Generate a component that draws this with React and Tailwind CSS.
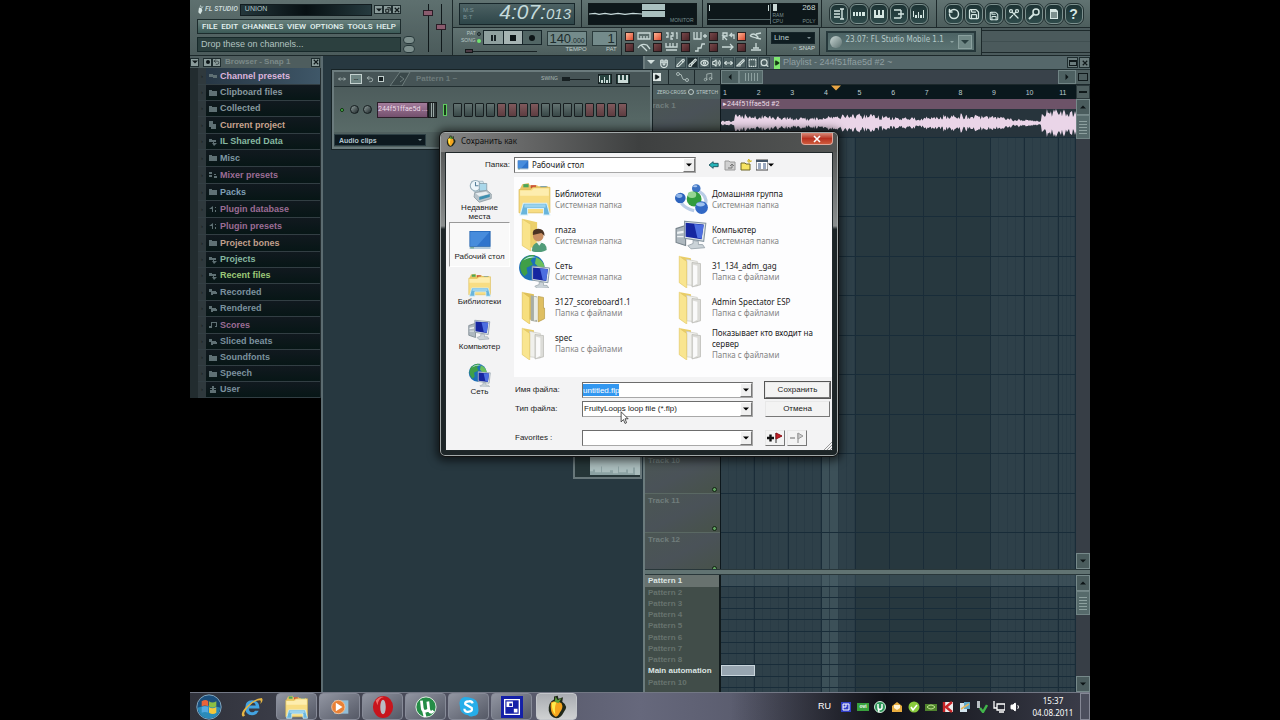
import { Play, RotateCcw, Save, Scissors, Undo2, Pencil, Magnet, Brush, Eye, Volume2, MoveHorizontal, Slice, SquareDashed, Search, Music, Volume1 } from 'lucide-react';

const menuItems = ['FILE', 'EDIT', 'CHANNELS', 'VIEW', 'OPTIONS', 'TOOLS', 'HELP'];

const browserItems = [
    { name: 'Channel presets', color: 'text-[#dcb4dc]', height: 'h-[17px]', icon: 'plug', active: true },
    { name: 'Clipboard files', color: 'text-[#87999f]', height: 'h-4', icon: 'folder' },
    { name: 'Collected', color: 'text-[#87999f]', height: 'h-4', icon: 'folder' },
    { name: 'Current project', color: 'text-[#c8a48e]', height: 'h-[17px]', icon: 'page' },
    { name: 'IL Shared Data', color: 'text-[#86b8a0]', height: 'h-4', icon: 'link' },
    { name: 'Misc', color: 'text-[#7f98a4]', height: 'h-[17px]', icon: 'folder' },
    { name: 'Mixer presets', color: 'text-[#9c6c94]', height: 'h-[17px]', icon: 'dots' },
    { name: 'Packs', color: 'text-[#7f9fb4]', height: 'h-[17px]', icon: 'folder' },
    { name: 'Plugin database', color: 'text-[#9c6c94]', height: 'h-[17px]', icon: 'plugin' },
    { name: 'Plugin presets', color: 'text-[#9c6c94]', height: 'h-[17px]', icon: 'plugin' },
    { name: 'Project bones', color: 'text-[#c0a08c]', height: 'h-[17px]', icon: 'folder' },
    { name: 'Projects', color: 'text-[#86b8a0]', height: 'h-4', icon: 'link' },
    { name: 'Recent files', color: 'text-[#9cc878]', height: 'h-4', icon: 'link' },
    { name: 'Recorded', color: 'text-[#7b929e]', height: 'h-[17px]', icon: 'wave' },
    { name: 'Rendered', color: 'text-[#7b929e]', height: 'h-4', icon: 'wave' },
    { name: 'Scores', color: 'text-[#9c6c94]', height: 'h-[17px]', icon: 'note' },
    { name: 'Sliced beats', color: 'text-[#7b929e]', height: 'h-4', icon: 'wave' },
    { name: 'Soundfonts', color: 'text-[#7b929e]', height: 'h-4', icon: 'folder' },
    { name: 'Speech', color: 'text-[#7b929e]', height: 'h-4', icon: 'folder' },
    { name: 'User', color: 'text-[#7b929e]', height: 'h-4', icon: 'user' },
];

const treePaths = {
    plug: 'M0 2h4v1h4v3H4V5H0z',
    folder: 'M0 1h3v1h5v5H0z',
    page: 'M0 0h4v3h3v5H2V6H0z',
    link: 'M0 1h3v1h4v2H5v1h3L5 8 3 5h1V4H0z',
    dots: 'M0 1h3v2H0zM0 4h3v2H0zM5 3h2v1H5zM5 5h3v2H5z',
    plugin: 'M0 4l4-3v6H3V4H1zM6 2h1v1H6zM6 5h1v2H6z',
    wave: 'M0 1h3v2h4v1h1v2H4v1H2V4H0z',
    note: 'M2 1h6v5H6V5h1V2H3v5H0V5h2z',
    user: 'M3 0h2v2h2v1H5v1h2v3H1V4h2V3H1V2h2z',
};

const patterns = ['Pattern 1', 'Pattern 2', 'Pattern 3', 'Pattern 4', 'Pattern 5', 'Pattern 6', 'Pattern 7', 'Pattern 8', 'Main automation', 'Pattern 10'];
const tracks = [1, 2, 3, 4, 5, 6, 7, 8, 9, 10, 11, 12];
const bars = [1, 2, 3, 4, 5, 6, 7, 8, 9, 10, 11];

const places = [
    { name: 'Недавние места', icon: RecentIcon },
    { name: 'Рабочий стол', icon: DesktopIcon, active: true },
    { name: 'Библиотеки', icon: LibraryIcon },
    { name: 'Компьютер', icon: ComputerIcon },
    { name: 'Сеть', icon: NetworkIcon },
];

const files = [
    { name: 'Библиотеки', type: 'Системная папка', icon: LibraryIcon },
    { name: 'Домашняя группа', type: 'Системная папка', icon: HomegroupIcon },
    { name: 'rnaza', type: 'Системная папка', icon: UserFolderIcon },
    { name: 'Компьютер', type: 'Системная папка', icon: ComputerIcon },
    { name: 'Сеть', type: 'Системная папка', icon: NetworkIcon },
    { name: '31_134_adm_gag', type: 'Папка с файлами', icon: FolderIcon },
    { name: '3127_scoreboard1.1', type: 'Папка с файлами', icon: FullFolderIcon },
    { name: 'Admin Spectator ESP', type: 'Папка с файлами', icon: FolderIcon },
    { name: 'spec', type: 'Папка с файлами', icon: FolderIcon },
    { name: 'Показывает кто входит на сервер', type: 'Папка с файлами', icon: FolderIcon },
];

// Closed outline of the audio clip, mirrored around its middle
function wavePath() {
    const top = [];
    const bottom = [];
    for (let x = 0; x <= 354; x++) {
        const noise = Math.abs(Math.sin(x * 127.1) * 43758.5453) % 1;
        const swell = 1 + 0.25 * Math.sin(x / 17);
        let amp = (3 + noise * 5) * swell;
        if (x < 14) amp = 1 + noise * 2;
        if (x > 290) amp = amp * 0.75;
        if (x > 306) amp = 1 + noise * 2;
        if (x > 319) amp = 6 + noise * 9;
        top.push(`${x} ${(14.5 - amp).toFixed(1)}`);
        bottom.unshift(`${x} ${(14.5 + amp).toFixed(1)}`);
    }
    return `M${top.join('L')}L${bottom.join('L')}Z`;
}

function RecentIcon({ className }) {
    return (
        <svg viewBox="0 0 32 32" className={className}>
            <path d="M5 3h15l4 14H8z" fill="#dcebf2" stroke="#9fb4c0" />
            <circle cx="10" cy="9" r="7" fill="#eef6fa" stroke="#9ab0bc" strokeWidth="1.5" />
            <path d="M10 4v5h4" fill="none" stroke="#58809a" strokeWidth="1.4" />
            <path d="M15 6h10v10H15z" fill="#a9d7ea" stroke="#8097a3" />
            <path d="M9 18l16-3 6 5v6l-16 5-7-7z" fill="#b8c3ca" stroke="#87959d" />
            <path d="M15 24l14-4v4l-14 4z" fill="#3d8fb0" />
            <path d="M10 19l14-2 4 3-13 3z" fill="#e8eef1" />
        </svg>
    );
}

function DesktopIcon({ className }) {
    return (
        <svg viewBox="0 0 32 32" className={className}>
            <path d="M2 4h28v24H2z" fill="#b4cbdc" />
            <path d="M2 4h28v21H2z" fill="#1c5fae" />
            <path d="M3 5h26v19H3z" fill="#2f74cc" />
            <path d="M3 5h26L12 24H3z" fill="#478cdc" />
            <path d="M3 26h5v1H3z" fill="#3c8b58" />
        </svg>
    );
}

function LibraryIcon({ className }) {
    return (
        <svg viewBox="0 0 32 32" className={className}>
            <path d="M4 2l6-1 1 2h7l1 1h9v24H2V6z" fill="#e8c565" />
            <path d="M5 2h5v3H5z" fill="#4aa658" />
            <path d="M12 3h5v3h-5z" fill="#cc5138" />
            <path d="M21 4h6v3h-6z" fill="#4990c8" />
            <path d="M1 7h11l2-2h16v24H1z" fill="#f8dd83" stroke="#d9b851" strokeWidth=".7" />
            <path d="M2 8h11l2-2h14v7H2z" fill="#fdedae" />
            <path d="M5 20h22l3 11h-6v-6H9v6H2z" fill="#69b5dc" stroke="#d6f0fc" />
            <path d="M6 21h20v3H6z" fill="#9bd3ee" />
        </svg>
    );
}

function MonitorShape() {
    return (
        <>
            <path d="M9 3l20 2-2 17-18-3z" fill="#dfe6ea" stroke="#8595a0" />
            <path d="M10 4.500l17 1.600-2 14-15-2.400z" fill="#1626a0" />
            <path d="M18 5.600l9 1-2 13-4-1z" fill="#4c6ee0" />
            <path d="M17 21l5 1v3h4l2 3-13 1-3-3 5-2z" fill="#cbd3d8" stroke="#8d9aa2" strokeWidth=".7" />
        </>
    );
}

function ComputerIcon({ className }) {
    return (
        <svg viewBox="0 0 32 32" className={className}>
            <path d="M1 10l9-3v19l-9-3z" fill="#aeb8bf" stroke="#77838b" />
            <path d="M2 13l6-1v2l-6 1zM2 17h6v1H2z" fill="#eef2f4" />
            <MonitorShape />
        </svg>
    );
}

function NetworkIcon({ className }) {
    return (
        <svg viewBox="0 0 32 32" className={className}>
            <circle cx="13" cy="13" r="12" fill="#1d6fb8" />
            <path d="M3 7q5-7 13-6l-4 5 2 4-6 3 1 5-3 3Q0 15 3 7z" fill="#3f9f48" />
            <path d="M17 3q7 3 8 9l-5 1-4-4z" fill="#6bc05c" />
            <path d="M5 6q5-5 12-3-7 0-12 3z" fill="#c9efff" />
            <g transform="translate(6 9) scale(.82)">
                <MonitorShape />
            </g>
        </svg>
    );
}

function HomegroupIcon({ className }) {
    return (
        <svg viewBox="0 0 32 32" className={className}>
            <path d="M23 9q7 4 6 11M6 20q4 5 12 7" fill="none" stroke="#b9cce6" strokeWidth="3" />
            <circle cx="20" cy="6" r="4" fill="#3d73c4" />
            <circle cx="5" cy="15" r="5" fill="#2c63bd" />
            <circle cx="18" cy="16" r="7" fill="#319c3e" />
            <circle cx="25" cy="24" r="6" fill="#3268c5" />
            <ellipse cx="16" cy="12" rx="4" ry="3" fill="#96d593" />
            <ellipse cx="4" cy="13" rx="3" ry="2" fill="#8eb4e8" />
            <ellipse cx="24" cy="21" rx="4" ry="2" fill="#9dc0ee" />
            <ellipse cx="19" cy="4" rx="2" ry="1" fill="#a8c6ee" />
        </svg>
    );
}

function FolderIcon({ className }) {
    return (
        <svg viewBox="0 0 32 32" className={className}>
            <path d="M5 2l10 2v25L5 26z" fill="#e9cd68" />
            <path d="M11 5l10 2v23l-10-1z" fill="#f0f0ec" stroke="#c6c6bf" strokeWidth=".6" />
            <path d="M16 8l8 1v20l-8 2z" fill="#dcdcd8" stroke="#b2b2ac" strokeWidth=".6" />
            <path d="M17 10l4 1v17l-4 2z" fill="#fafafa" />
            <path d="M4 2l7 5v25l-7-5z" fill="#f9e58f" stroke="#e2c762" strokeWidth=".6" />
        </svg>
    );
}

function FullFolderIcon({ className }) {
    return (
        <svg viewBox="0 0 32 32" className={className}>
            <path d="M5 2l10 2v25L5 26z" fill="#dfc15b" />
            <path d="M12 5l6 1v24l-6-1z" fill="#a8ada3" />
            <path d="M15 6l3 1v21l-3 1z" fill="#e8ebe4" />
            <path d="M19 6l5 1v10h1v10l-6 3z" fill="#dfbf62" stroke="#b4953e" strokeWidth=".6" />
            <path d="M4 2l7 5v25l-7-5z" fill="#f7df7e" stroke="#dcbd55" strokeWidth=".6" />
        </svg>
    );
}

function UserFolderIcon({ className }) {
    return (
        <svg viewBox="0 0 32 32" className={className}>
            <path d="M5 1l13 3v25L5 26z" fill="#ecd06b" />
            <path d="M4 1l8 5v25l-8-5z" fill="#f9e38a" stroke="#e2c762" strokeWidth=".6" />
            <path d="M13 31q0-8 7-8t7 7q-7 4-14 1z" fill="#519c79" />
            <path d="M17 22l3 4 3-4z" fill="#e9f0ec" />
            <circle cx="19" cy="17" r="5" fill="#c98f63" />
            <path d="M14 16q-1-6 5-6t6 7l-3-3z" fill="#4b3323" />
        </svg>
    );
}

function FruitIcon({ className }) {
    return (
        <svg viewBox="0 0 32 32" className={className}>
            <path d="M12 2l5-1 1 4 6-2-1 6q9 6 2 14-4 8-10 8-8-1-10-10-1-11 7-15z" fill="#20281a" />
            <path d="M8 10q7-4 14 1 3 6-2 12-3 6-6 6-5-3-6-9-1-6 0-10z" fill="#f5a51e" />
            <path d="M9 11q4-3 6-1-3 8-1 16-5-4-5-15z" fill="#ffec4d" />
            <path d="M13 9l1-7 3 5 5-3-4 7z" fill="#5d9e38" />
        </svg>
    );
}

function ArrowDown({ className }) {
    return (
        <svg viewBox="0 0 8 8" className={className}>
            <path d="M0 2h8L4 6z" fill="currentColor" />
        </svg>
    );
}

function TitleButton({ label, children }) {
    return (
        <button aria-label={label} className="flex h-[9px] w-[9px] items-center justify-center border border-[#1f2d2f] bg-[#8b9c9b] text-[#10191b]">
            {children}
        </button>
    );
}

function CloseCross({ className }) {
    return (
        <svg viewBox="0 0 8 8" className={className}>
            <path d="M1 1l6 6M7 1L1 7" stroke="currentColor" strokeWidth="1.6" />
        </svg>
    );
}

function TitlePanel() {
    return (
        <div className="flex w-[263px] shrink-0 border-r border-[#1d292b] bg-gradient-to-b from-[#5e706f] to-[#4b5b5b]">
            <div className="flex w-[211px] flex-col gap-[3px] pt-[3px] pl-[7px]">
                <div className="flex h-[13px] items-center">
                    <svg viewBox="0 0 12 14" className="h-[13px] w-2">
                        <path d="M3 4l4 1 1 4-3 5-3-3z" fill="#d6e4e2" />
                        <path d="M4 3l1-3 2 3 3-1-2 3z" fill="#a8bab8" />
                    </svg>
                    <span className="mr-0.5 text-[7px] leading-none font-medium text-[#d0dfdf] italic whitespace-nowrap font-['Roboto',sans-serif]">FL STUDIO</span>
                    <span className="flex h-3 flex-1 items-center border border-[#121d20] bg-gradient-to-r from-[#24373b] via-[#071013] to-[#263b3f] pl-1 text-[7px] text-[#b4c8ca]">UNION</span>
                    <span className="ml-0.5 flex">
                        <TitleButton label="Minimize"><ArrowDown className="h-1.5 w-1.5" /></TitleButton>
                        <TitleButton label="Restore">
                            <svg viewBox="0 0 8 8" className="h-1.5 w-1.5"><path d="M3 1h4v4M1 3h4v4H1z" fill="none" stroke="currentColor" strokeWidth="1.3" /></svg>
                        </TitleButton>
                        <TitleButton label="Close"><CloseCross className="h-1.5 w-1.5" /></TitleButton>
                    </span>
                </div>
                <nav className="flex h-[15px] items-center justify-between border border-[#1d2c2d] bg-gradient-to-b from-[#6a827e] to-[#3c5a57] px-1">
                    {menuItems.map((item) => (
                        <button key={item} className="text-[8px] leading-none font-medium text-[#e4f2f0] font-['Roboto',sans-serif]">{item}</button>
                    ))}
                </nav>
                <div className="flex h-[15px] items-center border border-[#17292a] bg-[#2c403f] pl-[3px] text-[9px] text-[#b3c4c1]">Drop these on channels...</div>
            </div>
            <div className="flex w-4 flex-col items-center justify-end gap-px pb-0.5">
                <span className="h-2 w-3 rounded-sm border border-[#27383a] bg-[#7e908e]" />
                <span className="h-2 w-3 rounded-sm border border-[#27383a] bg-[#7e908e]" />
            </div>
            <div className="flex flex-1 justify-center gap-[5px] pt-1">
                <div className="flex h-12 w-2 flex-col items-center">
                    <span className="h-1.5 w-px bg-[#10191b]" />
                    <span className="h-1.5 w-2.5 border border-[#2a1d26] bg-[#8a5b6e]" />
                    <span className="w-px flex-1 bg-[#10191b]" />
                </div>
                <div className="flex h-12 w-2 flex-col items-center">
                    <span className="h-5 w-px bg-[#10191b]" />
                    <span className="h-1.5 w-2.5 border border-[#2a1d26] bg-[#8a5b6e]" />
                    <span className="w-px flex-1 bg-[#10191b]" />
                </div>
            </div>
        </div>
    );
}

function RoundButton({ label, children }) {
    return (
        <button aria-label={label} className="flex h-5 w-[18px] items-center justify-center rounded-md border border-[#7d918f] bg-gradient-to-b from-[#1d3334] to-[#2e4a4a] text-[#d5e6e2] outline outline-[#243334]">
            {children}
        </button>
    );
}

function WindowGlyph({ d, filled }) {
    return (
        <svg viewBox="0 0 12 12" className="h-3 w-3">
            <path d={d} fill={filled ? 'currentColor' : 'none'} stroke={filled ? 'none' : 'currentColor'} strokeWidth="1.4" />
        </svg>
    );
}

const pianoKeys = 'M1 2h2v5h1v3H1zM5 2h2v5h1v3H4V7h1zM9 2h2v8H8V7h1z';
const mixerBars = 'M0 3h1v6H0zM2 7h2v3H2zM5 4h1v6H5zM7 7h2v3H7zM10 2h1v8h-1z';

function Led({ on, d }) {
    return (
        <span className="flex items-center gap-[3px]">
            <span className={on ? 'h-[9px] w-[9px] border border-[#2a2020] bg-gradient-to-br from-[#ffb494] to-[#d8472f]' : 'h-[9px] w-[9px] border border-[#201a1c] bg-gradient-to-br from-[#76484a] to-[#4b2428]'} />
            <svg viewBox="0 0 14 10" className="h-2.5 w-3.5">
                <path d={d} fill="none" stroke="#c9d8d6" strokeWidth="1.3" />
            </svg>
        </span>
    );
}

function Toolbar() {
    const panel = 'flex items-center border-r border-[#1d292b] bg-gradient-to-b from-[#617372] to-[#4d5e5d]';
    return (
        <header className="flex h-14 shrink-0 border-b border-[#1d292b] bg-[#56686a]">
            <TitlePanel />
            <div className="flex min-w-0 flex-1 flex-col">
                <div className="flex h-7 border-b border-[#1d292b]">
                    <div className={`${panel} w-[129px] shrink-0 justify-center`}>
                        <div className="flex h-[22px] w-[116px] items-center justify-between border border-[#17262a] bg-gradient-to-b from-[#4c6163] to-[#2e4649] px-[3px]">
                            <span className="flex flex-col text-[6px] leading-[7px] text-[#7b9496]"><span>M:S</span><span>B:T</span></span>
                            <span className="text-[#c4dadb] italic whitespace-nowrap"><span className="text-[21px] leading-none">4:07:</span><span className="text-[15px] leading-none">013</span></span>
                        </div>
                    </div>
                    <div className={`${panel} w-[121px] shrink-0 justify-center`}>
                        <div className="flex h-[22px] w-[109px] border border-[#10191b] bg-[#0d171a]">
                            <svg viewBox="0 0 53 20" className="w-[53px]">
                                <path d="M0 10l6-.6 4 1 6-1 6 1 7-1 7 1 8-1 9 .6" fill="none" stroke="#c9dcdc" strokeWidth="1.2" />
                            </svg>
                            <div className="flex flex-1 flex-col">
                                <div className="flex h-[13px] flex-col gap-px">
                                    <span className="h-1.5 w-[23px] bg-[#a9c0bf]" />
                                    <span className="h-1.5 w-[23px] bg-[#a9c0bf]" />
                                </div>
                                <span className="pr-0.5 text-right text-[5px] leading-[6px] text-[#7b9090]">MONITOR</span>
                            </div>
                        </div>
                    </div>
                    <div className={`${panel} w-[119px] shrink-0 justify-center`}>
                        <div className="flex h-[22px] w-[111px] border border-[#10191b] bg-[#0d171a]">
                            <div className="flex h-4 w-[62px] justify-between border-b border-[#56686a] px-px py-px"><span className="h-1.5 w-px bg-[#c9d8d6]" /><span className="h-1.5 w-px bg-[#c9d8d6]" /></div>
                            <div className="flex flex-1 flex-col border-l border-[#56686a] pr-px pl-0.5 text-[5px] leading-[6px] text-[#7b9090]">
                                <span className="flex items-center justify-between"><span className="h-[7px] w-1 bg-[#c9d8d6]" /><span className="text-[8px] leading-[8px] text-[#c9d8d6]">268</span></span>
                                <span>RAM</span>
                                <span className="flex justify-between"><span>CPU</span><span>POLY</span></span>
                            </div>
                        </div>
                    </div>
                    <div className={`${panel} w-[115px] shrink-0 justify-center gap-0.5`}>
                        <RoundButton label="Playlist"><WindowGlyph d="M1 3h6M1 6h6M1 9h6M9 1v10M7 1h4M7 11h4" /></RoundButton>
                        <RoundButton label="Step sequencer"><WindowGlyph filled d="M0 4h2v4H0zM3 4h2v4H3zM6 4h2v4H6zM9 4h3v4H9z" /></RoundButton>
                        <RoundButton label="Piano roll"><WindowGlyph filled d={pianoKeys} /></RoundButton>
                        <RoundButton label="Browser"><WindowGlyph d="M1 2h7M5 6h6M1 10h7M8 2v8" /></RoundButton>
                        <RoundButton label="Mixer"><WindowGlyph filled d={mixerBars} /></RoundButton>
                    </div>
                    <div className="flex flex-1 items-center justify-center gap-0.5 bg-gradient-to-b from-[#617372] to-[#4d5e5d]">
                        <RoundButton label="Undo"><RotateCcw strokeWidth={3} className="h-3 w-3" /></RoundButton>
                        <RoundButton label="Save new version"><Save strokeWidth={2.5} className="h-3 w-3" /></RoundButton>
                        <RoundButton label="Render"><Save strokeWidth={2.5} className="mt-1 h-2.5 w-2.5" /></RoundButton>
                        <RoundButton label="Edit audio"><Scissors strokeWidth={2.5} className="h-3 w-3 rotate-90" /></RoundButton>
                        <RoundButton label="Record">
                            <svg viewBox="0 0 12 12" className="h-3 w-3"><circle cx="8" cy="4" r="3" fill="none" stroke="currentColor" strokeWidth="1.500" /><path d="M6 6L1 11" stroke="currentColor" strokeWidth="2" /></svg>
                        </RoundButton>
                        <RoundButton label="Project info">
                            <svg viewBox="0 0 12 12" className="h-3 w-3"><path d="M2 1h6l2 2v8H2z" fill="currentColor" /><path d="M3 5h6M3 7h6M3 9h6" stroke="#243c3c" /></svg>
                        </RoundButton>
                        <RoundButton label="Help"><span className="text-[14px] leading-none font-bold">?</span></RoundButton>
                    </div>
                </div>
                <div className="flex flex-1">
                    <div className={`${panel} w-[169px] shrink-0 gap-[5px] pl-2`}>
                        <div className="flex flex-col">
                            <div className="flex items-start gap-0.5">
                                <div className="flex flex-col items-end text-[5px] leading-[7px] whitespace-nowrap text-[#b9c9c7]">
                                    <span className="flex items-center gap-px">PAT <i className="h-1 w-1 rounded-full border border-[#1d292b] bg-[#4a5a59]" /></span>
                                    <span className="flex items-center gap-px">SONG <i className="h-1 w-1 rounded-full bg-[#6fe36f]" /></span>
                                </div>
                                <div className="flex border border-[#18262a]">
                                    <button aria-label="Pause" className="flex h-[13px] w-[19px] items-center justify-center gap-px bg-[#8fa09f]"><span className="h-1.5 w-0.5 bg-[#162124]" /><span className="h-1.5 w-0.5 bg-[#162124]" /></button>
                                    <button aria-label="Stop" className="flex h-[13px] w-5 items-center justify-center border-x border-[#18262a] bg-[#a6b4b3]"><span className="h-1.5 w-1.5 bg-[#0d1517]" /></button>
                                    <button aria-label="Record" className="flex h-[13px] w-[18px] items-center justify-center bg-[#526665]"><span className="h-1.5 w-1.5 rounded-full bg-[#0d1517]" /></button>
                                </div>
                            </div>
                            <div className="mt-1 ml-1 flex items-center"><span className="h-1 w-2 border border-[#15191a] bg-[#4b3a44]" /><span className="h-px w-16 bg-[#192325]" /></div>
                        </div>
                        <div className="flex flex-col items-end">
                            <span className="flex h-[15px] w-10 items-baseline justify-end border border-[#2b3b3c] bg-[#748b8b] px-px leading-[13px] text-[#1d2b2c]"><span className="text-[13px]">140</span><span className="text-[7px]">.000</span></span>
                            <span className="text-[6px] leading-[6px] text-[#bdcbc9]">TEMPO</span>
                        </div>
                        <div className="flex flex-col items-end">
                            <span className="h-[15px] w-[25px] border border-[#2b3b3c] bg-[#748b8b] pr-px text-right text-[13px] leading-[13px] text-[#1d2b2c]">1</span>
                            <span className="text-[6px] leading-[6px] text-[#bdcbc9]">PAT</span>
                        </div>
                    </div>
                    <div className={`${panel} w-[145px] shrink-0 justify-center`}>
                        <div className="grid grid-cols-5 gap-x-0.5 gap-y-px">
                            <Led on d="M1 2h12v6H1zM4 5v3M7 5v3M10 5v3" />
                            <Led on d="M1 2h2v4H1M6 2h2v3H6v3h2M11 2h1v6" />
                            <Led d="M1 1v7h7V1M4 1v7M10 5h4M12 3v4" />
                            <Led d="M2 9V2h4v3H2l4 4M13 8V4H9l2-2M9 4l2 2" />
                            <Led on d="M1 5q3-4 7 0t-7 0M7 3l5-1M7 7l5 1" />
                            <Led d="M1 6q3-5 9-3l3 4M4 3l6 6" />
                            <Led d="M1 1v4h11V1M5 1v4M8 1v4M1 8h11" />
                            <Led d="M2 9h3V6h3l1-4h3" />
                            <Led d="M1 5h11M9 2l3 3-3 3" />
                            <Led d="M7 1v5M2 8h10M4 6h6" />
                        </div>
                    </div>
                    <div className={`${panel} w-[53px] shrink-0 flex-col justify-center gap-px`}>
                        <div className="relative w-11">
                            <select aria-label="Snap" className="block h-3 w-full appearance-none border border-[#17262a] bg-[#0f1d21] px-0.5 text-[8px] leading-none text-[#b6c9ca]"><option>Line</option></select>
                            <ArrowDown className="absolute top-1 right-1 h-1 w-1 text-[#7f9094]" />
                        </div>
                        <span className="self-end pr-1 text-[6px] leading-[6px] text-[#cbd8d6]">∩ SNAP</span>
                    </div>
                    <div className={`${panel} w-[162px] shrink-0 justify-center`}>
                        <div className="flex h-[21px] w-[150px] items-center gap-1 border-2 border-[#26383b] bg-gradient-to-b from-[#4c6364] to-[#5d7574] px-0.5">
                            <span className="h-3 w-3 shrink-0 rounded-full bg-gradient-to-br from-[#c9d6d4] to-[#5f7372]" />
                            <span className="flex-1 pb-1 text-[8px] leading-none whitespace-nowrap text-[#b5c9c8] font-['DejaVu_Sans_Condensed','DejaVu_Sans',sans-serif]">23.07: FL Studio Mobile 1.1</span>
                            <ArrowDown className="h-1 w-1 shrink-0 text-[#8fa5a3]" />
                            <span className="flex h-3.5 w-3.5 shrink-0 items-center justify-center border border-[#8aa09e] bg-[#6f8785] text-[#2b4041]"><ArrowDown className="h-2 w-2" /></span>
                        </div>
                    </div>
                    <div className="flex flex-1 flex-col gap-[10px] bg-[#4b5a5c] py-[2px]">
                        <span className="h-px bg-[#1d292b]" />
                        <span className="h-px bg-[#404f51]" />
                        <span className="h-px bg-[#1d292b]" />
                    </div>
                </div>
            </div>
        </header>
    );
}

function Browser() {
    return (
        <aside className="flex w-[133px] shrink-0 flex-col border-r-2 border-[#5b6b70] bg-[#000]">
            <div className="flex h-3 shrink-0 items-center bg-[#4e5d5e] pr-px">
                <TitleButton label="Menu"><ArrowDown className="h-1.5 w-1.5" /></TitleButton>
                <span className="w-1" />
                <TitleButton label="Snap"><span className="h-1 w-1 rounded-full bg-[#0d1517]" /></TitleButton>
                <TitleButton label="Back"><Undo2 className="h-2 w-2" /></TitleButton>
                <h2 className="ml-1 flex-1 text-[8px] leading-none font-bold text-[#7b8988]">Browser - Snap 1</h2>
                <TitleButton label="Close browser"><CloseCross className="h-1.5 w-1.5" /></TitleButton>
            </div>
            <div className="flex bg-[#222c2f] pr-px pl-2">
                <ul className="min-w-0 flex-1">
                    {browserItems.map((item) => (
                        <li key={item.name} className={`flex items-stretch border-b border-[#323e43] ${item.height}`}>
                            <span className="flex w-2 items-center justify-center bg-[#2f393d] text-[6px] text-[#12181a]">›</span>
                            <button className={`flex flex-1 items-center gap-[3px] pl-[3px] text-[9px] leading-none font-bold ${item.color} ${item.active ? 'bg-gradient-to-r from-[#273745] to-[#3f5768]' : 'bg-gradient-to-b from-[#11191f] to-[#071616]'}`}>
                                <svg viewBox="0 0 8 8" className="h-2 w-2 text-[#5f7074]"><path d={treePaths[item.icon]} fill="currentColor" /></svg>
                                {item.name}
                            </button>
                        </li>
                    ))}
                </ul>
            </div>
        </aside>
    );
}

function ChannelRack() {
    const steps = Array.from({ length: 16 }, (_, i) => i);
    return (
        <section className="absolute top-[70px] left-[142px] flex w-[320px] flex-col border-2 border-[#6b7b7d] bg-[#50605f] outline outline-[#172326]">
            <div className="flex h-[15px] items-center gap-1 border-b border-[#222f31] bg-[#465456] px-1">
                <MoveHorizontal className="h-2 w-2 text-[#c3d0ce]" />
                <span className="h-2.5 w-3 border border-[#c3d0ce] bg-[#6f8583] text-center text-[7px] leading-[7px] text-[#182224]">--</span>
                <Undo2 className="h-2 w-2 text-[#c3d0ce]" />
                <span className="h-1.5 w-1.5 border border-[#c3d0ce] bg-[#182224]" />
                <svg viewBox="0 0 24 14" className="h-3.5 w-6"><path d="M2 14L12 0h10L14 14zM12 4l4 3-4 3" fill="#3a484a" stroke="#6d7c7c" /></svg>
                <h2 className="flex-1 text-[8px] leading-none font-bold text-[#6d7b7b]">Pattern 1 ~</h2>
                <span className="text-[5px] text-[#aebbb9]">SWING</span>
                <span className="flex items-center"><span className="h-1 w-2 bg-[#172022]" /><span className="h-px w-5 bg-[#172022]" /></span>
                <span className="ml-1 flex h-2.5 w-3.5 items-center justify-center border border-[#172022] bg-[#27433f] text-[#cbdad7]"><WindowGlyph filled d={mixerBars} /></span>
                <span className="mr-4 flex h-2.5 w-3.5 items-center justify-center border border-[#172022] bg-[#27433f] text-[#cbdad7]"><WindowGlyph filled d={pianoKeys} /></span>
            </div>
            <div className="flex h-[45px] items-center bg-gradient-to-b from-[#4d5c5c] to-[#596b68] pl-1.5">
                <span className="h-1 w-1 rounded-full border border-[#0e300e] bg-[#54c254]" />
                <span className="ml-1.5 h-[9px] w-[9px] rounded-full border border-[#141c1e] bg-gradient-to-br from-[#93a09f] to-[#20292b]" />
                <span className="ml-1 h-[9px] w-[9px] rounded-full border border-[#141c1e] bg-gradient-to-br from-[#93a09f] to-[#20292b]" />
                <button className="ml-[5px] h-4 w-[51px] border border-[#2c1f2a] bg-gradient-to-b from-[#a37c9b] to-[#74506e] text-[7px] leading-none whitespace-nowrap text-[#ecdbe8] font-['Roboto',sans-serif]">244f51ffae5d ...</button>
                <span className="flex h-4 w-[9px] justify-evenly border border-[#15191a] bg-[#2d3637]"><i className="w-px bg-[#9aa8a6]" /><i className="w-px bg-[#9aa8a6]" /></span>
                <span className="mx-1.5 h-3 w-1 border border-[#61cb61] bg-[#163f18]" />
                <div className="flex gap-[2px]">
                    {steps.map((i) => (
                        <button key={i} aria-label={`Step ${i + 1}`} className={`h-3.5 w-[9px] rounded-[1px] border border-[#181f21] ${Math.floor(i / 4) % 2 ? 'bg-gradient-to-b from-[#80595c] to-[#5d3d41]' : 'bg-gradient-to-b from-[#637371] to-[#394848]'}`} />
                    ))}
                </div>
            </div>
            <div className="flex h-[15px] items-start pt-0.5">
                <div className="relative w-[92px]">
                    <select aria-label="Channel group" className="block h-3 w-full appearance-none border border-[#2d3f44] bg-[#0d191f] pl-1 text-[7px] leading-none font-bold text-[#b3c5cd]"><option>Audio clips</option></select>
                    <ArrowDown className="absolute top-1 right-1 h-1 w-1 text-[#7f9094]" />
                </div>
            </div>
        </section>
    );
}

function ScrollButton({ label, up }) {
    return (
        <button aria-label={label} className="flex h-4 w-full shrink-0 items-center justify-center border border-[#76898a] bg-[#4a5c5d] text-[#0c1416]">
            <ArrowDown className={up ? 'h-1.5 w-1.5 rotate-180' : 'h-1.5 w-1.5'} />
        </button>
    );
}

// Vertical bar lines: one column per bar, the last one is cut in half
function BarGrid() {
    return (
        <div className="absolute inset-0 flex">
            {bars.map((bar) => (
                <div key={bar} className={`flex border-r border-[#1a2c38] ${bar === 11 ? 'flex-1' : 'flex-[2]'} ${bar > 4 && bar < 9 ? 'bg-[#27383f]' : 'bg-[#2e4049]'}`}>
                    {(bar <= 4 || bar >= 9) && [1, 2, 3, 4].map((beat) => (
                        <span key={beat} className={`flex-1 border-r border-[#293b45] ${bar === 4 && beat < 3 ? 'bg-[#3c5058]' : ''}`} />
                    ))}
                </div>
            ))}
        </div>
    );
}

function Playlist() {
    const tools = [Pencil, Brush, Eye, Volume2, MoveHorizontal, Slice, SquareDashed, Search];
    return (
        <section className="flex w-[447px] shrink-0 flex-col border-l-2 border-[#6b7b7d] bg-[#4e5e5f]">
            <div className="flex h-3.5 shrink-0 items-center border-b border-[#223032] bg-[#55676a]">
                <span className="flex w-[26px] justify-center gap-1 text-[#d3dfdd]"><ArrowDown className="h-2 w-2" /><Magnet strokeWidth={3} className="h-2.5 w-2.5 rotate-[135deg]" /></span>
                <div className="mx-1 flex gap-px">
                    {tools.map((Tool, i) => (
                        <button key={i} aria-label={`Tool ${i + 1}`} className={`flex h-[11px] w-[11px] items-center justify-center border border-[#33454a] text-[#d3dfdd] ${i === 1 ? 'bg-[#1c2a2d]' : 'bg-[#4e6163]'}`}><Tool strokeWidth={3} className="h-2.5 w-2.5" /></button>
                    ))}
                </div>
                <span className="flex h-3 w-1.5 items-center justify-center bg-[#7fe870] text-[#123512]"><Play className="h-1.5 w-1.5 fill-current" /></span>
                <h2 className="ml-[3px] flex-1 text-[9px] leading-none whitespace-nowrap text-[#8f9fa1]">Playlist - 244f51ffae5d #2 ~</h2>
                <button aria-label="Maximize playlist" className="mr-px flex h-[11px] w-[11px] items-center justify-center border border-[#1f2d2f] bg-[#6a7b7c]"><span className="h-1.5 w-2 border border-t-2 border-[#10191b]" /></button>
                <button aria-label="Close playlist" className="flex h-[11px] w-[11px] items-center justify-center border border-[#1f2d2f] bg-[#6a7b7c] text-[#10191b]"><CloseCross className="h-1.5 w-1.5" /></button>
            </div>
            <div className="flex h-[15px] shrink-0 border-b border-[#1c282b]">
                <div className="flex w-[76px] border-r border-[#1c282b]">
                    <span className="flex w-6 items-center justify-center border-r border-[#1c282b]"><span className="flex h-2 w-2 items-center justify-center bg-[#dfe8e6] text-[#10191b]"><Play className="h-1.5 w-1.5 fill-current" /></span></span>
                    <span className="flex w-[26px] items-center justify-center border-r border-[#1c282b] text-[#a9b8b6]">
                        <svg viewBox="0 0 14 10" className="h-2.5 w-3.5"><path d="M4 2q3 0 3 3t4 3" fill="none" stroke="currentColor" /><circle cx="3" cy="2" r="1.500" fill="none" stroke="currentColor" /><circle cx="12" cy="8" r="1.500" fill="none" stroke="currentColor" /></svg>
                    </span>
                    <span className="flex flex-1 items-center justify-center text-[#a9b8b6]"><Music className="h-2.5 w-2.5" /></span>
                </div>
                <div className="flex min-w-0 flex-1 bg-[#39424a]">
                    <span className="flex w-[18px] items-center justify-center border border-[#718485] bg-[#4d6061]"><ArrowDown className="h-1.5 w-1.5 rotate-90 text-[#0c1416]" /></span>
                    <span className="flex w-6 items-center justify-center gap-0.5 border border-[#718485] bg-[#566a6b]">{[1, 2, 3, 4, 5].map((n) => <i key={n} className="h-2 w-px bg-[#8da09f]" />)}</span>
                    <span className="flex-1" />
                    <span className="flex w-[18px] items-center justify-center border border-[#718485] bg-[#4d6061]"><ArrowDown className="h-1.5 w-1.5 -rotate-90 text-[#0c1416]" /></span>
                </div>
                <span className="flex w-3.5 items-center justify-center"><span className="h-2 w-2.5 border border-[#10191b]" /></span>
            </div>
            <div className="flex h-3.5 shrink-0">
                <div className="flex w-[76px] items-center justify-end gap-0.5 border-r border-[#1c282b] pr-0.5 text-[5px] leading-none whitespace-nowrap text-[#bdcac8] font-['Roboto',sans-serif]"><span>ZERO-CROSS</span><span className="h-1.5 w-1.5 rounded-full border border-[#bdcac8]" /><span>STRETCH</span></div>
                <div className="relative flex min-w-0 flex-1 items-center bg-[#0a181d] pl-0.5 text-[7px] leading-none text-[#bdced1]">
                    {bars.map((bar) => <span key={bar} className={bar === 11 ? 'w-0 flex-1' : 'w-0 flex-[2]'}>{bar}</span>)}
                    <ArrowDown className="absolute -top-0.5 left-[31%] h-2.5 w-2.5 text-[#e9a545]" />
                </div>
                <span className="flex w-3.5 items-center justify-center border border-[#2b383b]"><span className="h-0.5 w-2 bg-[#10191b]" /></span>
            </div>
            <div className="flex min-h-0 flex-1">
                <div className="w-[76px] shrink-0 overflow-hidden border-r border-[#0d171c]">
                    {tracks.map((track) => (
                        <div key={track} className={`flex flex-col justify-between border-b border-[#5a6863] bg-gradient-to-br from-[#4b5653] via-[#4a5258] to-[#475249] px-[3px] pt-0.5 pb-px ${track % 2 ? 'h-[39px]' : 'h-10'}`}>
                            <span className="text-[8px] leading-[9px] font-bold text-[#707d7c]">Track {track}</span>
                            <span className="h-[5px] w-[5px] self-end rounded-full border border-[#102210] bg-[#63a563]" />
                        </div>
                    ))}
                </div>
                <div className="relative min-w-0 flex-1 overflow-hidden">
                    <BarGrid />
                    <div className="relative">
                        {tracks.map((track) => (
                            <div key={track} className={`border-b border-[#182c39] ${track % 2 ? 'h-[39px]' : 'h-10'}`}>
                                {track === 1 && (
                                    <div className="flex h-full flex-col bg-[#27343c]">
                                        <span className="h-2.5 bg-[#6d5368] pl-0.5 text-[7px] leading-[10px] text-[#eadbe6] font-['Roboto',sans-serif]">▸244f51ffae5d #2</span>
                                        <svg viewBox="0 0 354 29" preserveAspectRatio="none" className="min-h-0 w-full flex-1"><path d={wavePath()} fill="#ead5e8" /></svg>
                                    </div>
                                )}
                            </div>
                        ))}
                    </div>
                </div>
                <div className="flex w-3.5 shrink-0 flex-col bg-[#373e46]">
                    <ScrollButton label="Scroll tracks up" up />
                    <span className="flex h-6 flex-col items-center justify-center gap-0.5 border border-[#718485] bg-[#566a6b]">{[1, 2, 3, 4, 5].map((n) => <i key={n} className="h-px w-2 bg-[#8da09f]" />)}</span>
                    <span className="flex-1" />
                    <ScrollButton label="Scroll tracks down" />
                </div>
            </div>
            <div className="h-1.5 shrink-0 border-y border-[#29373a] bg-[#617372]" />
            <div className="flex h-[117px] shrink-0">
                <div className="w-[76px] shrink-0 overflow-hidden border-r-2 border-[#10191b] bg-[#414d49]">
                    {patterns.map((name, i) => (
                        <div key={name} className={`pl-[3px] text-[8px] leading-[11px] font-bold whitespace-nowrap ${i % 4 === 0 ? 'h-3' : 'h-[11px]'} ${i === 0 ? 'bg-[#68726f]' : ''} ${i === 0 || i === 8 ? 'text-[#dce4e2]' : 'text-[#67736e]'}`}>{name}</div>
                    ))}
                </div>
                <div className="relative min-w-0 flex-1 overflow-hidden">
                    <BarGrid />
                    <div className="relative">
                        {patterns.map((name, i) => (
                            <div key={name} className={`border-b border-[#182c39] ${i % 4 === 0 ? 'h-3' : 'h-[11px]'} ${i === 0 ? 'bg-[#5a7278]/30' : ''}`}>
                                {i === 8 && <div className="h-full w-[34px] border border-[#c9d5dc] bg-[#97a5b0]" />}
                            </div>
                        ))}
                    </div>
                </div>
                <div className="flex w-3.5 shrink-0 flex-col bg-[#373e46]">
                    <ScrollButton label="Scroll patterns up" up />
                    <span className="flex h-6 flex-col items-center justify-center gap-0.5 border border-[#718485] bg-[#566a6b]">{[1, 2, 3, 4, 5].map((n) => <i key={n} className="h-px w-2 bg-[#8da09f]" />)}</span>
                    <span className="flex-1" />
                    <ScrollButton label="Scroll patterns down" />
                </div>
            </div>
        </section>
    );
}

function ComboArrow() {
    return (
        <span className="pointer-events-none flex h-full w-3 shrink-0 items-center justify-center border border-t-white border-r-[#777] border-b-[#777] border-l-white bg-[#f0f0f0] text-black">
            <ArrowDown className="h-1.5 w-1.5" />
        </span>
    );
}

function SaveDialog() {
    const box = 'flex h-4 items-center border border-t-[#6d6d6d] border-r-[#a8a8a8] border-b-[#a8a8a8] border-l-[#6d6d6d] bg-white text-[8px] text-[#222]';
    const button = 'h-4 border border-t-[#e8e8e8] border-r-[#777] border-b-[#777] border-l-[#e8e8e8] bg-[#f3f3f3] text-[8px] leading-none text-[#222]';
    return (
        <section role="dialog" aria-labelledby="save-title" className="absolute top-[131px] left-[249px] w-[400px] rounded-md border border-[#111] bg-gradient-to-b from-[#4a4c4c] via-[#8b8f8f] via-29% to-[#1d2527] to-30% px-[5px] pb-[5px] shadow-[0_1px_8px_3px_#0009] inset-ring inset-ring-[#a3a9a9]">
            <div className="-mx-1 mt-px flex h-[19px] items-start rounded-t bg-gradient-to-r from-[#858585] via-[#3e4040] to-[#535554] px-1">
                <div className="flex flex-1 items-center gap-1 pt-0.5">
                    <FruitIcon className="h-3 w-3" />
                    <h2 id="save-title" className="text-[8px] leading-3 text-[#111] font-['Noto_Sans',sans-serif]">Сохранить как</h2>
                </div>
                <button aria-label="Закрыть" className="flex h-3 w-8 items-center justify-center rounded-b border border-t-0 border-[#e0a79b] bg-gradient-to-b from-[#d98877] via-[#b73121] to-[#cf5a3c] text-white"><CloseCross className="h-2 w-2" /></button>
            </div>
            <div className="relative border border-[#20282a] bg-[#f3f3f4] pb-1">
                <div className="flex h-6 items-center">
                    <label htmlFor="folder" className="w-[68px] pr-1 text-right text-[8px] text-[#222]">Папка:</label>
                    <div className={`${box} w-[182px]`}>
                        <DesktopIcon className="ml-0.5 h-3 w-3" />
                        <select id="folder" className="h-full min-w-0 flex-1 appearance-none pl-[3px] text-[8px] leading-none font-['Noto_Sans',sans-serif]"><option>Рабочий стол</option></select>
                        <ComboArrow />
                    </div>
                    <div className="ml-3 flex items-center gap-1">
                        <button aria-label="Назад"><svg viewBox="0 0 12 12" className="h-2.5 w-3"><path d="M0 6l5-4v2h6v4H5v2z" fill="#25b4b8" stroke="#174a55" /></svg></button>
                        <button aria-label="Вверх"><svg viewBox="0 0 12 12" className="h-3 w-3"><path d="M1 2h4l1 1h5v8H1z" fill="#d0d0d0" stroke="#9a9a9a" /><path d="M4 9h4V5M6 7l2-2 2 2" fill="none" stroke="#777" /></svg></button>
                        <button aria-label="Новая папка"><svg viewBox="0 0 12 12" className="h-3 w-3"><path d="M1 4h4l1 1h4v6H1z" fill="#f7e463" stroke="#6e6629" /><path d="M9 0v4M7 2h5M8 0l3 3" stroke="#d4b928" /></svg></button>
                        <button aria-label="Вид" className="flex items-center"><svg viewBox="0 0 12 12" className="h-3 w-3"><path d="M0 1h12v10H0z" fill="#fff" stroke="#444" /><path d="M0 1h12v2H0z" fill="#456" /><path d="M2 5h3M2 7h3M2 9h3M7 5h3M7 7h3M7 9h3" stroke="#35507e" /></svg><ArrowDown className="h-1.5 w-1.5" /></button>
                    </div>
                </div>
                <div className="flex items-start">
                    <ul className="ml-[3px] w-[61px] shrink-0">
                        {places.map(({ name, icon: Icon, active }) => (
                            <li key={name} className={active ? 'border border-t-[#999] border-r-white border-b-white border-l-[#999] bg-[#f9f9f9]' : ''}>
                                <button className={`flex w-full flex-col items-center justify-center text-[8px] leading-[9px] text-[#222] ${active ? 'h-[43px]' : 'h-[45px]'}`}>
                                    <Icon className="h-6 w-6 shrink-0" />
                                    <span className="w-12 whitespace-normal text-center">{active ? <span className="-mx-2 whitespace-nowrap">{name}</span> : name}</span>
                                </button>
                            </li>
                        ))}
                    </ul>
                    <div className="ml-1 min-w-0 flex-1">
                        <ul className="grid h-[200px] auto-rows-[36px] grid-cols-[157px_1fr] content-start bg-[#fdfdfe] pt-1 pl-1 font-['Noto_Sans',sans-serif]">
                            {files.map(({ name, type, icon: Icon }) => (
                                <li key={name} className="flex items-center gap-[3px]">
                                    <Icon className="h-[34px] w-[34px] shrink-0" />
                                    <span className="flex w-[110px] flex-col text-[8px] leading-[11px] text-[#222]"><span>{name}</span><span className="text-[#858585]">{type}</span></span>
                                </li>
                            ))}
                        </ul>
                        <div className="mt-[5px] ml-px grid grid-cols-[67px_171px_65px] items-center gap-y-[3px] text-[8px] text-[#222]">
                            <label htmlFor="file-name">Имя файла:</label>
                            <div className={`${box} justify-between`}>
                                <input id="file-name" defaultValue="untitled.flp" className="field-sizing-content h-3 bg-[#3297f0] leading-none text-white" />
                                <ComboArrow />
                            </div>
                            <button className={`${button} ml-3 w-[65px] outline outline-[#555]`}>Сохранить</button>
                            <label htmlFor="file-type">Тип файла:</label>
                            <div className={box}>
                                <select id="file-type" className="h-full min-w-0 flex-1 appearance-none pl-px leading-none"><option>FruityLoops loop file (*.flp)</option></select>
                                <ComboArrow />
                            </div>
                            <button className={`${button} ml-3 w-[65px]`}>Отмена</button>
                            <label htmlFor="favorites" className="mt-2.5">Favorites :</label>
                            <div className={`${box} mt-2.5`}>
                                <select id="favorites" className="h-full min-w-0 flex-1 appearance-none"><option></option></select>
                                <ComboArrow />
                            </div>
                            <div className="mt-2.5 ml-3 flex gap-0.5">
                                <button aria-label="Add favorite" className={`${button} flex w-5 items-center justify-center`}><svg viewBox="0 0 16 12" className="h-3 w-4"><path d="M0 6h7M3.500 2.500v7" stroke="#111" strokeWidth="2.400" /><path d="M9 1v10" stroke="#333" /><path d="M9 1l6 3-6 3z" fill="#c31d25" stroke="#8d1218" /></svg></button>
                                <button aria-label="Remove favorite" className={`${button} flex w-5 items-center justify-center`}><svg viewBox="0 0 16 12" className="h-3 w-4"><path d="M1 6h5" stroke="#999" strokeWidth="1.500" /><path d="M9 1v10" stroke="#888" /><path d="M9 1l5 3-5 3z" fill="#ccc" stroke="#999" /></svg></button>
                            </div>
                        </div>
                    </div>
                </div>
                <svg viewBox="0 0 8 8" className="absolute right-0 bottom-0 h-2 w-2"><path d="M0 8l8-8M3 8l5-5M6 8l2-2" stroke="#999" /></svg>
            </div>
        </section>
    );
}

function ClipWindow() {
    return (
        <div className="absolute top-[440px] left-[383px] flex h-[39px] w-[69px] items-end border-2 border-[#68777a] bg-[#263638] pl-[15px]">
            <svg viewBox="0 0 50 30" preserveAspectRatio="none" className="mb-0.5 h-7 w-full bg-[#a9bcbc]">
                <path d="M0 30v-4h3v-2h2v3h6v-6h1v6h8v-2h3v3h5v-7h1v6h7v-3h2v4h5v-6h2v8z" fill="#8ca2a3" />
            </svg>
        </div>
    );
}

function TaskButton({ label, active, children }) {
    return (
        <button aria-label={label} className={`flex h-[27px] w-[41px] items-center justify-center rounded-sm border ${active ? 'border-[#c3c6ca] bg-gradient-to-b from-[#a9acb1] to-[#cfd1d2]' : 'border-[#878b98] bg-gradient-to-br from-[#9296a2] to-[#555966]'}`}>
            {children}
        </button>
    );
}

function Taskbar() {
    return (
        <footer className="flex h-7 shrink-0 items-center border-t border-[#737885] bg-gradient-to-r from-[#30323b] via-[#66687c] via-50% to-[#343641]">
            <button aria-label="Пуск" className="ml-1.5">
                <svg viewBox="0 0 32 32" className="h-[26px] w-[26px]">
                    <circle cx="16" cy="16" r="15" fill="#1c507d" stroke="#96bbd3" />
                    <path d="M2 17q14-6 28 0-2 13-14 13T2 17z" fill="#2b8bb9" />
                    <path d="M7 9q5-3 8 0v6q-4-2-8 0z" fill="#e9633a" />
                    <path d="M16 9q4 3 9 0v6q-5 3-9 0z" fill="#8abf43" />
                    <path d="M7 16q4-2 8 0v7q-4-2-8 0z" fill="#53a9e1" />
                    <path d="M16 16q4 3 9 0v7q-4 3-9 0z" fill="#f5c73a" />
                </svg>
            </button>
            <button aria-label="Internet Explorer" className="ml-[18px]">
                <svg viewBox="0 0 32 32" className="h-6 w-6">
                    <path d="M25 21q-3 6-9 6-9 0-9-10t9-10q10 0 10 11H12q0 5 4 5 3 0 4-2zM12 14h9q-1-4-4-4t-5 4z" fill="#43a3e1" fillRule="evenodd" />
                    <path d="M4 29q-5-4 5-14T29 4q3 3-2 8 2-5-1-5-7 0-15 9T7 27z" fill="#e6b543" />
                </svg>
            </button>
            <div className="ml-3 flex gap-[2px]">
                <TaskButton label="Проводник"><LibraryIcon className="h-6 w-6" /></TaskButton>
                <TaskButton label="Windows Media Player">
                    <svg viewBox="0 0 24 24" className="h-5 w-5"><path d="M5 4h17v16H5z" fill="#93bfd8" /><circle cx="10" cy="12" r="8" fill="#e98136" stroke="#f7c59d" /><path d="M7 7l8 5-8 5z" fill="#fff" /></svg>
                </TaskButton>
                <TaskButton label="Opera">
                    <svg viewBox="0 0 24 24" className="h-[22px] w-[22px]"><ellipse cx="12" cy="12" rx="11" ry="12" fill="#c8151d" /><ellipse cx="12" cy="12" rx="3" ry="8" fill="#b9bcc4" /><path d="M4 5q4-5 9-4-6 1-7 9z" fill="#f06b68" /></svg>
                </TaskButton>
                <TaskButton label="uTorrent">
                    <svg viewBox="0 0 24 24" className="h-[22px] w-[22px]"><circle cx="12" cy="12" r="11" fill="#258d47" stroke="#e9f4ea" /><path d="M7 5l1 9q1 4 5 2l2-1-1-9m1 9q2 5 5 1M9 15l2 8" fill="none" stroke="#fff" strokeWidth="3" /></svg>
                </TaskButton>
                <TaskButton label="Skype">
                    <svg viewBox="0 0 24 24" className="h-[22px] w-[22px]"><path d="M7 1q5 0 6 1 9 1 9 10 2 10-6 10-3 1-5-1-9-1-9-10Q0 3 7 1z" fill="#26aeea" /><path d="M16 8q-1-3-5-2-4 0-3 3l7 4q1 4-3 4-5 1-5-3" fill="none" stroke="#fff" strokeWidth="2.500" /></svg>
                </TaskButton>
                <TaskButton label="Recorder">
                    <svg viewBox="0 0 24 24" className="h-[22px] w-[22px]"><path d="M0 0h24v24H0z" fill="#1420a8" /><path d="M4 4h16v16H4z" fill="none" stroke="#fff" strokeWidth="1.500" /><path d="M6 6h7v6H6zM14 14h4v4h-4z" fill="#fff" /><path d="M9 8h3v3H9z" fill="#1420a8" /></svg>
                </TaskButton>
                <div className="ml-0.5">
                    <TaskButton label="FL Studio" active><FruitIcon className="h-6 w-6" /></TaskButton>
                </div>
            </div>
            <div className="flex flex-1 items-center justify-end gap-[5px] self-stretch bg-gradient-to-r from-transparent from-30% via-[#101117] via-60% to-[#3c3e4b]">
                <span className="mr-1 text-[9px] text-white">RU</span>
                <svg viewBox="0 0 10 10" className="h-2.5 w-3"><path d="M0 0h10v10H0z" fill="#3340c8" /><path d="M2 2h6v6H2zM2 5h3V2" fill="none" stroke="#fff" /></svg>
                <span className="flex h-2 w-3 items-center justify-center bg-[#38a03c] text-[5px] leading-none font-bold text-white">ovi</span>
                <svg viewBox="0 0 12 12" className="h-3 w-3"><circle cx="6" cy="6" r="5.500" fill="#2c9658" stroke="#d4eadb" /><path d="M4 3v4q2 3 4 0V3M4 7l1 4" fill="none" stroke="#fff" strokeWidth="1.500" /></svg>
                <svg viewBox="0 0 12 12" className="h-3 w-3"><path d="M1 5l5-4 5 4v6H1z" fill="#e9ad3f" /><path d="M3 4h6v3L6 9 3 7z" fill="#fff4d6" /></svg>
                <svg viewBox="0 0 12 12" className="h-3 w-3"><circle cx="6" cy="6" r="5.500" fill="#8acb3d" /><path d="M3 6l2 3 4-5" fill="none" stroke="#fff" strokeWidth="1.600" /></svg>
                <svg viewBox="0 0 12 12" className="h-3 w-3"><path d="M0 3h12v7H0z" fill="#4f832d" /><path d="M2 6q4-4 8 0-4 4-8 0z" fill="none" stroke="#bde28f" /></svg>
                <svg viewBox="0 0 12 12" className="h-3 w-3"><path d="M1 1h10v10H1z" fill="#ececec" /><path d="M2 1v10M10 1L4 6l6 5" fill="none" stroke="#c92528" strokeWidth="2.400" /></svg>
                <svg viewBox="0 0 12 12" className="h-3 w-3"><path d="M1 2h7v9H1z" fill="#d5e5ee" /><path d="M5 1h6v7H5z" fill="#60a9cb" /><path d="M2 8l8-5" stroke="#e2b65e" strokeWidth="1.500" /></svg>
                <svg viewBox="0 0 12 12" className="h-3 w-3"><path d="M1 0h3v7H1z" fill="#b9bfc4" /><path d="M4 7l3 4 4-7" fill="none" stroke="#42b64b" strokeWidth="2.400" /></svg>
                <svg viewBox="0 0 12 12" className="h-3 w-3"><path d="M4 3h8v6H4zM1 0v7h3M6 11h5" fill="none" stroke="#fff" strokeWidth="1.300" /></svg>
                <Volume1 className="h-3 w-3 fill-white text-white" />
                <time className="ml-1 w-11 text-center text-[8px] leading-[12px] text-white font-['Noto_Sans',sans-serif]">15:37<br />04.08.2011</time>
                <button aria-label="Свернуть все окна" className="w-2.5 self-stretch border border-[#858895] bg-[#4c4f5d]" />
            </div>
        </footer>
    );
}

export default function App() {
    return (
        <div className="flex min-h-screen justify-center bg-black font-['Liberation_Sans',Arial,sans-serif]">
            <main className="relative flex h-screen w-full max-w-[900px] flex-col overflow-hidden bg-[#28383f]">
                <Toolbar />
                <div className="flex min-h-0 flex-1">
                    <Browser />
                    <div className="flex-1 bg-[#273840]" />
                    <Playlist />
                </div>
                <Taskbar />
                <ChannelRack />
                <ClipWindow />
                <SaveDialog />
                <svg viewBox="0 0 12 18" className="absolute top-[411px] left-[430px] h-3.5 w-2.5">
                    <path d="M1 1v13l3-3 2 5 2-1-2-5h4z" fill="#fff" stroke="#222" />
                </svg>
            </main>
        </div>
    );
}
